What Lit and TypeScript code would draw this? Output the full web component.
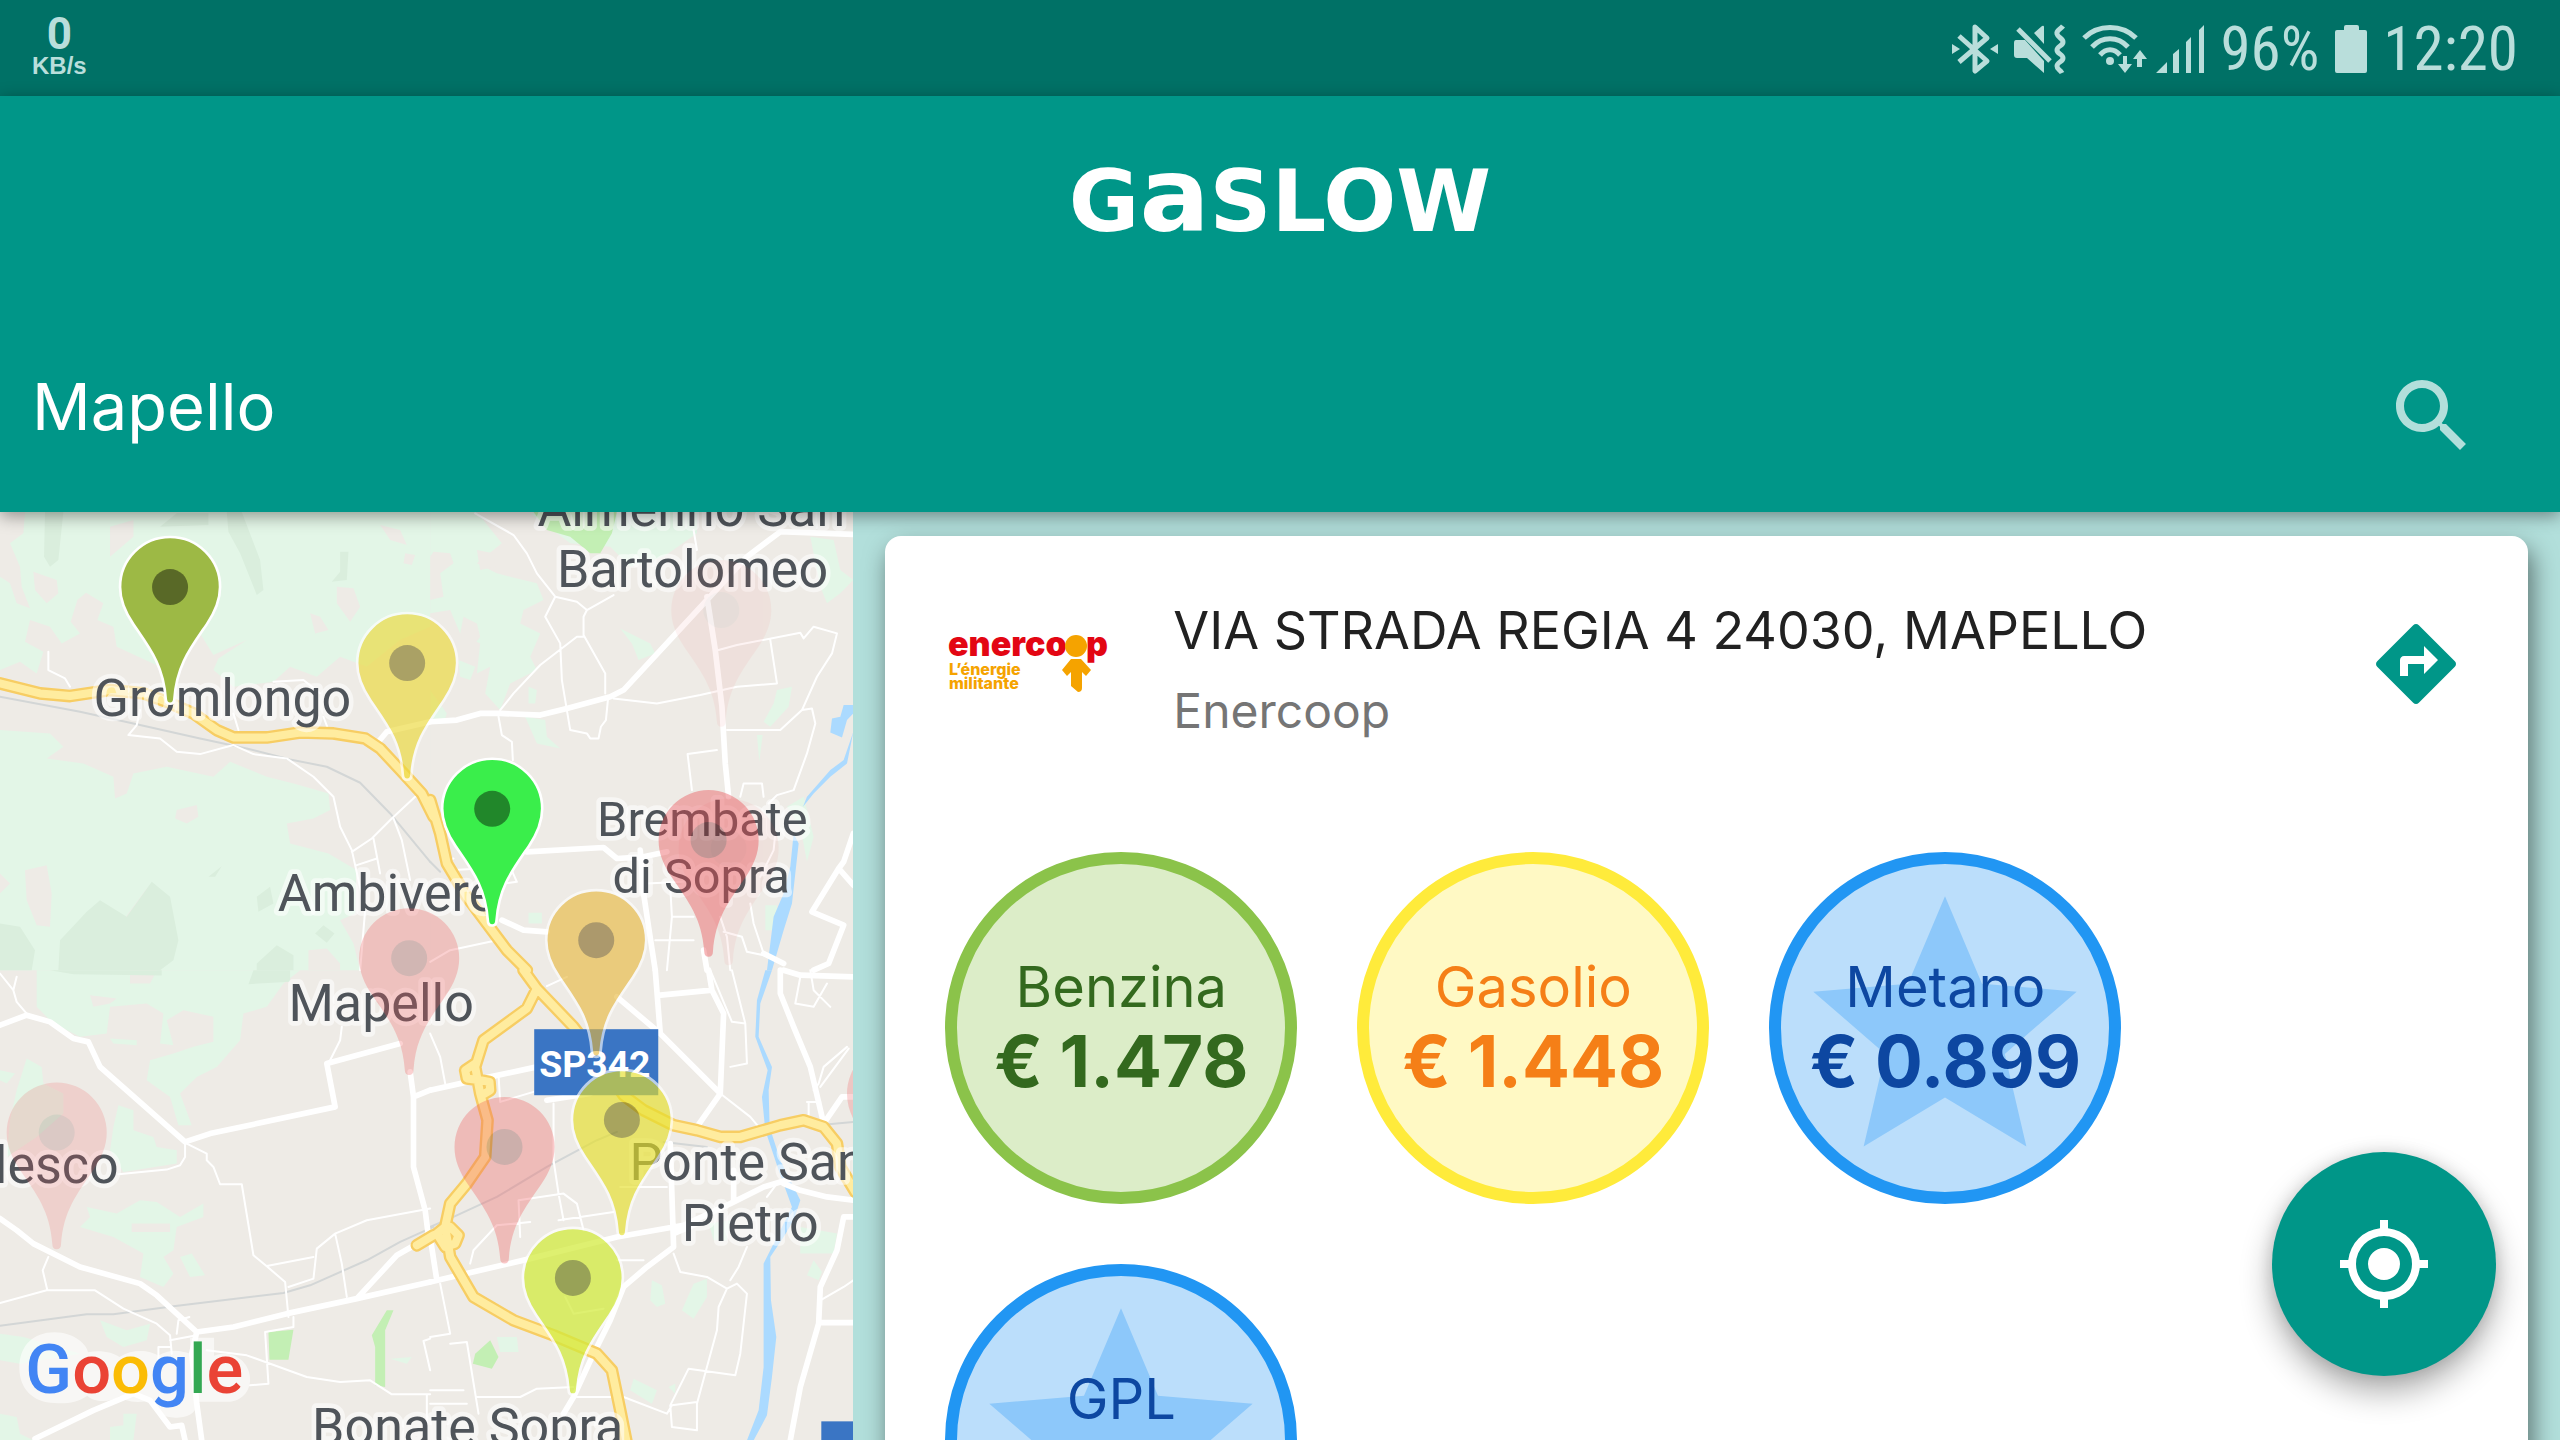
import { LitElement, html, svg, css, nothing } from "lit";
import { customElement, property } from "lit/decorators.js";

interface Fuel {
  name: string;
  price: string;
  tone: "good" | "fair" | "best";
  star?: boolean;
}

interface Pin {
  x: number;
  y: number;
  fill: string;
  opacity: number;
}

interface Label {
  x: number;
  y: number;
  text: string;
  anchor: "start" | "middle" | "end";
  small?: boolean;
}

interface Tile {
  x: number;
  y: number;
  green: string[];
  land: string[];
  forest: string[];
  park: string[];
  water: string[];
  rail: string[];
  minor: string[];
  major: string[];
  highway: string[];
}

const FUELS: Fuel[] = [
  { name: "Benzina", price: "€ 1.478", tone: "good" },
  { name: "Gasolio", price: "€ 1.448", tone: "fair" },
  { name: "Metano", price: "€ 0.899", tone: "best", star: true },
  { name: "GPL", price: "", tone: "best", star: true },
];

const TILES: Tile[] = [
  {
    x: 0,
    y: -36,
    green: ["M0 30H1290V600L1060 900 1080 1410H0Z"],
    land: [
      "M0 510L60 485 110 520 130 455 75 425 90 360 150 380 185 430 240 400 212 365 232 300 258 278 310 310 292 360 340 380 350 440 480 500 600 400 640 465 740 420 655 475 640 510 700 560 820 545 870 500 950 530 1020 470 1100 500 1200 420 1290 380V1410H1080L1060 1330 1020 1260 1065 1240 1070 1110 985 1060 870 1030 860 970 940 955 990 930 985 880 880 850 800 830 690 785 640 830 500 800 400 820 380 880 345 895 340 830 250 790 140 775 190 740 150 700 0 690Z",
      "M0 36H75L70 100 30 130 60 200 65 260 90 325 50 310 30 250 0 230Z",
      "M330 80L400 60 400 110 330 170Z",
      "M100 215L170 240 175 280 140 310 105 270Z",
      "M1140 75L1200 90 1220 135 1170 120Z",
      "M1215 160L1245 165 1235 195 1210 190Z",
      "M1010 260L1060 265 1080 320 1050 365 1010 310Z",
      "M930 340L960 350 985 390 945 400Z",
      "M530 930L590 915 595 950 560 970 525 955Z",
      "M75 1110L140 1095 155 1180 150 1280 110 1275 80 1200Z",
      "M255 1240L370 1260 440 1165 480 1200 400 1290 300 1290Z",
      "M925 1350L980 1345 1020 1390 1020 1410H925Z",
      "M0 1120L30 1150 0 1180Z",
    ],
    forest: [
      "M135 36H190L175 180 150 200 132 170Z",
      "M680 36H725L780 180 790 270 770 285 720 160 685 95Z",
      "M480 80L530 40 625 40 625 75Z",
      "M1020 155H1045L1040 240 995 245 1020 215Z",
      "M0 1270L60 1280 105 1350 95 1410H0Z",
      "M180 1320L260 1235 300 1200 380 1250 455 1145 510 1190 535 1320 520 1380 480 1410H175Z",
      "M770 1190L810 1160 820 1210 775 1235Z",
      "M945 1300L970 1275 1003 1300 980 1328Z",
      "M770 1390L830 1335 880 1365 880 1410H770Z",
      "M625 1130L665 1098 645 1130Z",
    ],
    park: [],
    water: [],
    rail: ["M0 590L240 635 420 675 600 715 740 745 870 778 980 800 1080 848 1170 940 1290 1085"],
    minor: [
      "M145 455V510L195 535 210 560",
      "M420 630L410 675 385 705 480 715 530 755 600 762 700 735 760 762 860 775 940 830 1000 890 1020 980 1055 1050 1095 1230 1080 1410",
      "M1055 1055L1115 1015 1175 955 1245 890",
      "M1180 955L1205 1020 1230 1140",
      "M1120 1015L1140 1120M1070 1095L1130 1075M700 640L715 690M970 650L985 690M820 545L910 540 960 580",
    ],
    major: ["M1135 725L1160 695 1290 665"],
    highway: ["M0 550L120 580 210 588 330 570 430 580 500 605 580 640 650 690 700 712 800 712 900 697 1000 700 1095 715 1140 745 1210 820 1265 880 1300 950"],
  },
  {
    x: 1290,
    y: -36,
    green: [
      "M0 36H140L215 130 140 190 200 220 320 250 340 300 280 330 270 370 330 400 300 470 320 510 240 550 210 630 165 580 180 500 140 520 150 430 90 400 60 330 0 340Z",
      "M85 480L135 500 120 540 90 530Z",
      "M0 570L50 640 40 670 0 660Z",
      "M300 40L420 36H800V100L700 170 600 200 540 140 420 130Z",
      "M570 385L660 430 675 460 625 480 605 430Z",
      "M1040 570L1085 560 1075 620 1020 680 1000 665 1030 610Z",
      "M1140 110L1210 120 1230 210 1269 240 1230 280 1190 310 1170 260Z",
      "M285 650L345 660 350 710 390 745 320 730Z",
      "M980 705H997L987 785Z",
      "M1070 920L1120 890 1150 1010 1130 1085 1110 980Z",
      "M1005 1215H1040V1290H1005Z",
      "M295 560L320 570 315 610 295 610ZM295 1238H335V1270H295Z",
    ],
    land: ["M10 155L60 160 70 190 30 220 40 290 0 300V170ZM140 150L190 160 195 200 150 210ZM100 350L140 370 150 410 120 450 90 400Z"],
    forest: [],
    park: ["M310 36H560L545 100 510 160 480 160 420 110 350 90Z"],
    water: [
      "M1240 615H1269V640L1250 660 1235 712 1200 697 1205 655 1230 650Z",
      "M1269 695L1250 790 1200 830 1150 880 1118 920 1130 890 1200 810 1240 780Z",
      "M1090 1000L1105 1030 1095 1120 1085 1210 1060 1290 1025 1410H1010L1030 1250 1060 1180 1080 1100Z",
    ],
    rail: ["M0 1085L30 1115"],
    minor: [
      "M135 40L250 105 290 160 320 220 375 290 345 350 390 430 395 540 420 690 470 700 480 715 505 715 512 680 527 660 533 600",
      "M375 290L440 305 470 330 460 350V405L525 520V580M470 330L550 285",
      "M210 630L250 580 330 495 440 410H460",
      "M205 650L215 705 245 725 248 780",
      "M865 450L920 435 1110 398 1120 415 1150 380 1220 400 1205 460 1160 530 1115 630 1050 690H890M1020 420L1040 550 920 560 810 585 680 610 550 595",
      "M1115 630L1145 625 1155 670 1130 760 1090 870 1040 885 1015 910",
      "M930 890L940 850H995L1000 890M785 870L772 762 860 750M790 90L800 150",
      "M0 1385L60 1350 200 1320M70 1075L40 1085M60 1110L240 1100 260 1145 220 1150",
      "M710 1410L725 1250 720 1160M675 1320H790M725 1250H790M880 1295L935 1310 950 1355 1000 1365M650 1150L760 1145M900 1410L890 1310 870 1250M990 1130L1030 1050 1035 1000M960 1210L970 1270 1000 1360",
    ],
    major: [
      "M0 665L80 660 150 640 210 640 330 645 410 625 540 590 580 570 830 300 950 170 1050 95 1269 103",
      "M830 290L855 450 875 620 885 790 895 890",
      "M290 1055L520 1042 560 1075 640 1070 710 1055",
      "M630 1050L640 1180 655 1280 675 1410",
      "M215 1260L280 1290 350 1295",
      "M820 1350L830 1410M1269 1000L1240 1085 1225 1105 1145 1235 1240 1275 1195 1390 1150 1410M1225 1105L1269 1155M1000 1360L1060 1390",
    ],
    highway: ["M0 900L30 1000 50 1090 110 1190 170 1270 230 1350 290 1410"],
  },
  {
    x: 0,
    y: 1374,
    green: [
      "M110 0H900L850 40 800 110 730 130 720 210 650 290 590 320 540 370 575 465 535 465 510 380 440 330 450 270 520 250 580 230 640 215 640 140 550 120 500 150 520 225 480 220 490 130 440 100 330 110 320 190 240 200 160 160 110 110Z",
      "M80 265L125 290 130 340 190 370 190 430 110 500 20 560 30 450 50 360Z",
      "M355 405L400 420 400 480 460 500 470 530 530 540 530 580 370 605 330 540 340 470Z",
      "M260 710L350 730 420 690 470 695 540 740 610 700 610 740 530 770 520 840 490 860 520 910 490 950 420 920 430 850 340 800 240 770 270 740Z",
      "M540 860L575 850 615 915 570 920Z",
      "M300 1050L380 1080 450 1060 440 1110 370 1130 320 1100Z",
      "M0 1090L70 1100 240 1150 60 1180 0 1170Z",
      "M0 1330L50 1340 60 1390 100 1410H0Z",
      "M370 1330L410 1330 400 1410H330L330 1370 370 1365Z",
      "M330 205L410 210V225L340 220ZM0 300L45 310 20 340 0 330Z",
      "M1170 1165L1235 1160 1220 1180Z",
    ],
    land: ["M395 760H510V785H395Z", "M390 0H470L450 40H390ZM270 75L350 85 330 100 280 110Z"],
    forest: ["M150 0H485V16L220 12ZM760 0H870V35L745 42Z"],
    park: ["M805 1085L880 1078 865 1168H808ZM1160 1020H1180L1155 1080V1250L1125 1245V1130L1115 1095Z"],
    water: [],
    rail: ["M0 1066L260 1032 340 1032 520 1008 850 968 930 945 1100 870 1200 815 1300 770"],
    minor: [
      "M0 10L40 60 50 95 80 130M50 20L40 60",
      "M555 520V560L540 585 500 598 355 612M560 520L620 550V570L640 590 660 642H725L760 855 800 888 855 935 865 1040",
      "M800 887L940 860M0 998L140 960H285L370 1015 470 1060 510 1095 515 1150M145 860L128 900 142 960",
      "M1290 715L1100 750 1005 790 950 835 940 925M1005 790L1025 880 1040 980M880 1040V1070L795 1085 805 1240 750 1245M510 1110L590 1095M475 1130H510M475 1130V1180M530 1090L535 1050 568 1040",
      "M620 1140L740 1155 920 1220 1020 1235 1110 1230 1175 1272H1290M985 280L1020 210 1025 170M1290 1105L1270 1112 1290 1200M1280 1272V1400",
      "M865 950L940 925",
    ],
    major: [
      "M0 165L80 135 150 155 220 205 265 215 300 290 555 515 630 490 1005 410 980 280 1200 220",
      "M0 745L50 780 100 820 240 890 420 940 470 975 590 1085 700 1070 860 1030 1070 985 1290 935M1070 985L1190 855 1260 815",
      "M590 1085L575 1150 590 1300 605 1410M105 1405L280 1320 400 1270 450 1290 510 1370 545 1365 555 1410",
      "M1230 305L1240 380 1240 590 1275 720 1285 800M1240 380L1290 360",
    ],
    highway: ["M1250 825L1300 795"],
  },
  {
    x: 1290,
    y: 1374,
    green: [
      "M665 930L695 945 705 1000 680 1010 660 990Z",
      "M790 940L830 925 830 980 790 1045 755 1020Z",
      "M1150 870L1175 905 1165 930 1130 915ZM1110 770L1220 790 1210 850 1110 850Z",
      "M200 1100L260 1100 265 1145 210 1145Z",
      "M610 1225L680 1260 665 1300 600 1260ZM715 1250L735 1240 735 1270Z",
      "M835 760L900 750 890 810 850 810Z",
    ],
    land: [],
    forest: [],
    park: ["M180 1110L205 1160 185 1195 128 1180 135 1150Z"],
    water: [
      "M1005 0H1025L990 100 985 200 1025 290 1015 360 1018 470 1050 570 1085 640 1110 690 1090 750 1060 800 1020 860 1022 990 1038 1100 1025 1220 1010 1335 970 1410H950L985 1320 1000 1190 1000 1000 1000 880 1040 800 1085 710 1045 600 1005 480 995 380 1012 300 975 200 980 90Z",
    ],
    rail: ["M0 770L70 740 200 680 350 590 500 510 560 485M700 515L830 530M1195 462L1269 455"],
    minor: [
      "M350 48L410 20M0 190L30 260 45 340M205 315L210 395 310 365M370 400V570L385 670 400 750",
      "M265 690L400 670 440 700 460 780M385 750L550 725M265 690L270 800M120 880L130 840 200 765 300 755",
      "M840 0L905 155 945 160 950 280 900 290M905 0L945 160M870 370L960 440 985 470",
      "M1110 20L1095 100 1150 110 1190 40M1140 0L1150 60 1200 110M1250 230L1180 290 1165 340 1150 360M1255 235L1170 350M1130 395H1170M1135 395V440",
      "M730 850L750 905 830 920 890 955 920 940 950 970 930 1150 915 1215 775 1195 720 1305 725 1370 800 1380V1300L860 1080 865 1010 890 955",
      "M440 1280H580L710 1330 725 1305 800 1295M140 1280H270L320 1255 430 1250M60 1120L110 1115 145 1330M30 940L60 1090 0 1100M0 1260H100M0 1300H110",
      "M570 650H710M560 870L640 870M405 980L430 1030 520 1015M900 930L925 890 950 830M1170 990L1240 950 1269 930M1040 640L1010 680",
    ],
    major: [
      "M0 935L300 865 560 800 760 765 900 700 1000 650 1100 620",
      "M0 360L180 320 320 290M350 390L480 370",
      "M560 80L690 190 870 370 800 470M675 0L690 190M835 0L845 60 880 130 870 370M690 75L845 60",
      "M1050 0V70L1090 170 1140 290 1180 460M1180 460L1235 380H1269",
      "M720 520L730 830 650 890 580 950 540 1050 490 1150 430 1280 400 1330M730 790L800 760M910 600V690",
      "M0 800L20 930M1269 740H1240L1220 840 1170 950 1165 1060 1110 1250 1080 1410M1170 1057H1269M1060 640L1110 660 1190 680 1269 690M1060 0L1110 15 1269 20",
    ],
    highway: [
      "M280 0L320 55 430 170 500 260 580 375 640 420 730 465 800 480 870 500H930L1050 465 1120 450 1180 470 1220 520 1230 590 1275 665",
      "M320 55L290 115 160 210 135 290 150 370 172 450 165 560 110 640 60 700 45 770 60 860 130 980 250 1050 370 1095 500 1150 545 1200 570 1320 590 1420",
      "M135 280L105 300 110 325 150 330M150 330L178 335 180 360 155 375M45 770L20 790 45 830 75 820 85 795 60 770",
    ],
  },
];

const LABELS: Label[] = [
  { x: 667, y: 612, text: "Gromlongo", anchor: "middle" },
  { x: 833, y: 1197, text: "Ambivere", anchor: "start" },
  { x: 865, y: 1527, text: "Mapello", anchor: "start" },
  { x: 356, y: 2012, text: "lesco", anchor: "end" },
  { x: 2073, y: 42, text: "Almenno San", anchor: "middle" },
  { x: 2077, y: 226, text: "Bartolomeo", anchor: "middle" },
  { x: 2106, y: 972, text: "Brembate", anchor: "middle", small: true },
  { x: 2103, y: 1144, text: "di Sopra", anchor: "middle", small: true },
  { x: 1888, y: 2004, text: "Ponte San", anchor: "start" },
  { x: 2250, y: 2187, text: "Pietro", anchor: "middle" },
  { x: 936, y: 2799, text: "Bonate Sopra", anchor: "start" },
];

const PINS: Pin[] = [
  { x: 2163, y: 294, fill: "#f06464", opacity: 0.07 },
  { x: 2185, y: 1009, fill: "#f06464", opacity: 0.07 },
  { x: 510, y: 225, fill: "#9db945", opacity: 1 },
  { x: 1221, y: 453, fill: "#ecd93a", opacity: 0.65 },
  { x: 1476, y: 890, fill: "#3aee4b", opacity: 1 },
  { x: 2125, y: 984, fill: "#ea4a50", opacity: 0.4 },
  { x: 1227, y: 1338, fill: "#f0585a", opacity: 0.28 },
  { x: 1788, y: 1284, fill: "#e8b83c", opacity: 0.62 },
  { x: 170, y: 1861, fill: "#f0585a", opacity: 0.18 },
  { x: 2690, y: 1744, fill: "#f0585a", opacity: 0.25 },
  { x: 1513, y: 1904, fill: "#f0585a", opacity: 0.32 },
  { x: 1865, y: 1823, fill: "#e6e02a", opacity: 0.65 },
  { x: 1718, y: 2297, fill: "#d2eb3a", opacity: 0.72 },
];

const PIN_PATH =
  "M0 350C-8 350-13 345-13 335C-20 235-60 185-110 112C-135 75-150 40-150 0A150 150 0 0 1 150 0C150 40 135 75 110 112C60 185 20 235 13 335C13 345 8 350 0 350Z";

@customElement("status-bar")
class StatusBar extends LitElement {
  static styles = css`
    :host {
      display: flex;
      align-items: center;
      justify-content: space-between;
      height: 96px;
      padding: 0 42px 0 32px;
      background: #007166;
      color: #b9dedb;
      box-sizing: border-box;
    }
    .speed {
      display: flex;
      flex-direction: column;
      align-items: center;
      font: 700 24px/28px "Liberation Sans", Arial, sans-serif;
    }
    .speed-value {
      font: 700 44px/36px "Liberation Sans Narrow", Roboto, sans-serif;
    }
    .tray,
    .pair {
      display: flex;
      align-items: center;
      gap: 16px;
    }
    .tray {
      padding-top: 2px;
      font: 400 61px/64px "Liberation Sans Narrow", "Roboto Condensed", Roboto, sans-serif;
    }
    .tray svg {
      display: block;
      height: 56px;
      fill: currentColor;
    }
    .tray .line {
      fill: none;
      stroke: currentColor;
      stroke-width: 5;
      stroke-linejoin: round;
    }
    .radios {
      display: flex;
      gap: 8px;
    }
  `;

  render() {
    return html`
      <div class="speed"><span class="speed-value">0</span><span>KB/s</span></div>
      <div class="tray">
        <svg width="46" viewBox="0 0 46 56" role="img" aria-label="Bluetooth">
          <path class="line" d="M7 15L35 40 23 50V6L35 17 7 41" />
          <path d="M0 23L8 28 0 33ZM46 23L38 28 46 33Z" />
        </svg>
        <svg width="52" viewBox="0 0 52 56" role="img" aria-label="Vibrate">
          <path d="M2 19H11L30 40V52L13 37H3Q0 37 0 34V22Q0 19 2 19ZM20 12L28 5Q30 4 30 6V23Z" />
          <path class="line" d="M4 8L36 40" />
          <path class="line" d="M49 5C46 9 42 9 43 13S49 17 49 21 43 25 43 29 49 33 49 37 43 41 43 45 46 48 48 52" />
        </svg>
        <div class="radios">
          <svg width="66" viewBox="0 0 66 56" role="img" aria-label="Wi-Fi">
            <path class="line" d="M2 17C16 3 40 3 54 17M10 26C20 15 36 15 46 26M18 34C24 27 32 27 38 34" />
            <circle cx="28" cy="40" r="4" />
            <path d="M41 35H45V43H50L43 52 36 43H41ZM55 46H60V38H65L58 29 51 38H55Z" />
          </svg>
          <svg width="48" viewBox="0 0 48 56" role="img" aria-label="Signal">
            <path d="M0 52L11 41V52ZM17 33L23 28V52H17ZM30 21L35 16V52H30ZM43 9L48 4V52H43Z" />
          </svg>
        </div>
        <div class="pair">
          <span>96%</span>
          <svg width="32" viewBox="0 0 32 56" role="img" aria-label="Battery">
            <path d="M9 9V6Q9 4 11 4H22Q24 4 24 6V9H30Q32 9 32 11V50Q32 52 30 52H2Q0 52 0 50V11Q0 9 2 9Z" />
          </svg>
        </div>
        <time>12:20</time>
      </div>
    `;
  }
}

@customElement("station-map")
class StationMap extends LitElement {
  static styles = css`
    :host {
      display: block;
      overflow: hidden;
      background: #eeebe6;
    }
    .canvas {
      display: block;
      width: 100%;
      height: 100%;
    }
    .green {
      fill: #e3f6e7;
    }
    .land {
      fill: #eeebe6;
    }
    .forest {
      fill: #daeedd;
    }
    .park {
      fill: #c3efb4;
    }
    .water {
      fill: #abdaff;
    }
    .rail,
    .minor,
    .major,
    .highway-edge,
    .highway {
      fill: none;
      stroke-linejoin: round;
      stroke-linecap: round;
    }
    .rail {
      stroke: #d3d6d6;
      stroke-width: 6;
    }
    .minor {
      stroke: #ffffff;
      stroke-width: 6;
    }
    .major {
      stroke: #ffffff;
      stroke-width: 17;
    }
    .highway-edge {
      stroke: #f7cd63;
      stroke-width: 38;
    }
    .highway {
      stroke: #ffec9f;
      stroke-width: 24;
    }
    .label {
      font: 400 156px Roboto, sans-serif;
      fill: #4f545a;
      stroke: rgba(255, 255, 255, 0.55);
      stroke-width: 28;
      stroke-linejoin: round;
      paint-order: stroke;
    }
    .small {
      font-size: 146px;
    }
    .badge {
      fill: #3a75c4;
    }
    .badge-text {
      font: 700 112px Roboto, sans-serif;
      fill: #ffffff;
    }
    .pin {
      stroke: #ffffff;
      stroke-width: 8;
    }
    .faint {
      stroke: none;
    }
    .dot {
      fill: #000000;
      fill-opacity: 0.43;
    }
    .brand-halo {
      fill: rgba(255, 255, 255, 0.6);
    }
    .brand {
      font: 500 206px Roboto, sans-serif;
    }
    .blue {
      fill: #4285f4;
    }
    .red {
      fill: #ea4335;
    }
    .amber {
      fill: #fbbc05;
    }
    .leaf {
      fill: #34a853;
    }
  `;

  private layer(key: Exclude<keyof Tile, "x" | "y">, cls: string) {
    return TILES.map(
      (t) => svg`<g transform="translate(${t.x} ${t.y})"><path class=${cls} d=${t[key].join("")} /></g>`
    );
  }

  render() {
    return html`
      <svg class="canvas" viewBox="0 0 2559 2784" preserveAspectRatio="xMinYMin slice" role="img" aria-label="Map">
        ${this.layer("green", "green")} ${this.layer("land", "land")} ${this.layer("forest", "forest")}
        ${this.layer("park", "park")} ${this.layer("rail", "rail")} ${this.layer("minor", "minor")}
        ${this.layer("water", "water")} ${this.layer("major", "major")}
        ${this.layer("highway", "highway-edge")} ${this.layer("highway", "highway")}
        ${LABELS.map(
          (l) => svg`<text class=${l.small ? "label small" : "label"} x=${l.x} y=${l.y} text-anchor=${l.anchor}>${l.text}</text>`
        )}
        <rect class="badge" x="1602" y="1551" width="372" height="198" />
        <text class="badge-text" x="1784" y="1694" text-anchor="middle">SP342</text>
        <rect class="badge" x="2463" y="2727" width="372" height="198" />
        ${PINS.map(
          (p) => svg`
            <g transform="translate(${p.x} ${p.y})" opacity=${p.opacity}>
              <path class=${p.opacity < 0.5 ? "faint" : "pin"} fill=${p.fill} d=${PIN_PATH} />
              <circle class="dot" r="54" />
            </g>`
        )}
        <path
          class="brand-halo"
          d="M163 2460C225 2460 262 2500 264 2520C300 2512 340 2520 358 2534C400 2508 450 2514 474 2530C510 2508 540 2514 570 2524V2476H642V2530C700 2508 750 2550 750 2600C750 2650 710 2670 680 2668H594C588 2706 560 2716 526 2716C486 2716 462 2696 456 2664C400 2676 372 2664 358 2652C330 2672 280 2670 262 2650C230 2672 200 2674 163 2672C100 2670 58 2630 58 2566C58 2500 100 2460 163 2460Z"
        />
        <text class="brand" x="76" y="2643"><tspan class="blue">G</tspan><tspan class="red">o</tspan><tspan class="amber">o</tspan><tspan class="blue">g</tspan><tspan class="leaf">l</tspan><tspan class="red">e</tspan></text>
      </svg>
    `;
  }
}

@customElement("fuel-price")
class FuelPrice extends LitElement {
  @property({ attribute: false }) fuel!: Fuel;

  static styles = css`
    :host {
      display: block;
    }
    .disc {
      display: grid;
      place-items: center;
      width: 352px;
      height: 352px;
      border: 12px solid;
      border-radius: 50%;
      box-sizing: border-box;
    }
    .disc > * {
      grid-area: 1 / 1;
    }
    .good {
      color: #33691e;
      background: #dcedc8;
      border-color: #8bc34a;
    }
    .fair {
      color: #f57f17;
      background: #fff9c4;
      border-color: #ffeb3b;
    }
    .best {
      color: #0d47a1;
      background: #bbdefb;
      border-color: #2196f3;
    }
    .star {
      width: 316px;
      height: 316px;
      fill: #8dc8fa;
    }
    .text {
      display: flex;
      flex-direction: column;
      align-items: center;
      padding-bottom: 6px;
      white-space: nowrap;
    }
    .name {
      font-size: 56px;
      line-height: 72px;
    }
    .price {
      min-height: 76px;
      font-size: 71px;
      line-height: 76px;
      font-weight: 700;
    }
  `;

  render() {
    const f = this.fuel;
    return html`
      <div class="disc ${f.tone}">
        ${f.star
          ? html`<svg class="star" viewBox="0 0 24 24" aria-hidden="true">
              <path d="M12 17.27L18.18 21l-1.64-7.03L22 9.24l-7.19-.61L12 2 9.19 8.63 2 9.24l5.46 4.73L5.82 21z" />
            </svg>`
          : nothing}
        <div class="text">
          <span class="name">${f.name}</span>
          <span class="price">${f.price}</span>
        </div>
      </div>
    `;
  }
}

@customElement("station-card")
class StationCard extends LitElement {
  static styles = css`
    :host {
      display: block;
      background: #ffffff;
      border-radius: 16px;
      box-shadow: 4px 12px 24px rgba(0, 0, 0, 0.5);
    }
    .head {
      display: flex;
      align-items: center;
      gap: 64px;
      height: 256px;
      padding: 0 64px;
      box-sizing: border-box;
    }
    .logo {
      flex: none;
      width: 160px;
      height: 60px;
      overflow: visible;
    }
    .logo-name {
      font: 900 34px Inter, sans-serif;
      fill: #e30613;
    }
    .logo-tag {
      font: 800 16px Inter, sans-serif;
      fill: #f5a300;
    }
    .figure {
      fill: #f5a300;
    }
    .address {
      flex: 1;
      min-width: 0;
      padding-top: 14px;
    }
    .street {
      margin: 0;
      font-size: 52px;
      line-height: 80px;
      font-weight: 400;
      color: #212121;
      white-space: nowrap;
    }
    .company {
      margin: 0;
      font-size: 48px;
      line-height: 80px;
      color: #757575;
    }
    .route {
      flex: none;
      display: block;
      width: 96px;
      height: 96px;
      fill: #009688;
    }
    .route svg {
      display: block;
    }
    .fuels {
      display: flex;
      flex-wrap: wrap;
      gap: 60px;
      margin: 0;
      padding: 60px;
      list-style: none;
    }
  `;

  render() {
    return html`
      <header class="head">
        <svg class="logo" viewBox="0 0 160 60" role="img" aria-label="Enercoop">
          <text class="logo-name" x="-1" y="22">enerco</text>
          <circle class="figure" cx="127" cy="12" r="11" />
          <text class="logo-name" x="137" y="22">p</text>
          <path class="figure" d="M122 25H132L142 36 137 42 133 38V54Q133 58 129 58L122 52V38L118 42 113 36Z" />
          <text class="logo-tag" x="0" y="41">L’énergie</text>
          <text class="logo-tag" x="0" y="55">militante</text>
        </svg>
        <div class="address">
          <h2 class="street">VIA STRADA REGIA 4 24030, MAPELLO</h2>
          <p class="company">Enercoop</p>
        </div>
        <a class="route" href="#route" aria-label="Directions">
          <svg width="96" height="96" viewBox="0 0 24 24" aria-hidden="true">
            <path d="M21.71 11.29l-9-9c-.39-.39-1.02-.39-1.41 0l-9 9c-.39.39-.39 1.02 0 1.41l9 9c.39.39 1.02.39 1.41 0l9-9c.39-.38.39-1.01 0-1.41zM14 14.5V12h-4v3H8v-4c0-.55.45-1 1-1h5V7.5l3.5 3.5-3.5 3.5z" />
          </svg>
        </a>
      </header>
      <ul class="fuels">
        ${FUELS.map((f) => html`<li><fuel-price .fuel=${f}></fuel-price></li>`)}
      </ul>
    `;
  }
}

@customElement("app-root")
class AppRoot extends LitElement {
  static styles = css`
    :host {
      display: flex;
      flex-direction: column;
      height: 100vh;
      overflow: hidden;
      background: #b2dfdb;
      font-family: Inter, "Open Sans", sans-serif;
    }
    .bar {
      flex: none;
      z-index: 1;
      background: #009688;
      box-shadow: 0 4px 16px rgba(0, 0, 0, 0.4);
    }
    .title {
      display: flex;
      align-items: center;
      justify-content: center;
      height: 224px;
      margin: 0;
      padding-bottom: 20px;
      box-sizing: border-box;
      font: 700 86px/120px "DejaVu Sans", sans-serif;
      color: #ffffff;
    }
    .tall {
      font-size: 104px;
    }
    .search {
      display: flex;
      align-items: center;
      height: 192px;
      padding: 0 80px 0 32px;
    }
    .query {
      flex: 1;
      min-width: 0;
      height: 128px;
      padding: 0 0 20px;
      border: 0;
      outline: 0;
      background: none;
      color: #ffffff;
      font: 400 65px/96px Inter, "Open Sans", sans-serif;
      box-sizing: border-box;
    }
    .icon-button {
      flex: none;
      padding: 0;
      border: 0;
      background: none;
      cursor: pointer;
    }
    .icon-button svg,
    .locate svg {
      display: block;
    }
    .icon-button svg {
      fill: #b2dfdb;
    }
    .content {
      position: relative;
      flex: 1;
      min-height: 0;
      display: grid;
      grid-template-columns: 1fr 2fr;
      grid-template-rows: minmax(0, 1fr);
    }
    .stations {
      min-width: 0;
      padding: 24px 32px;
      overflow: hidden;
    }
    .locate {
      position: absolute;
      right: 64px;
      bottom: 64px;
      display: grid;
      place-items: center;
      width: 224px;
      height: 224px;
      padding: 0;
      border: 0;
      border-radius: 50%;
      background: #009688;
      box-shadow: 0 16px 32px rgba(0, 0, 0, 0.32), 0 0 16px rgba(0, 0, 0, 0.12);
      cursor: pointer;
    }
    .locate svg {
      fill: #ffffff;
    }
  `;

  render() {
    return html`
      <status-bar></status-bar>
      <header class="bar">
        <h1 class="title"><span>G<span class="tall">a</span>SLOW</span></h1>
        <form class="search" role="search" @submit=${(e: Event) => e.preventDefault()}>
          <input class="query" type="text" name="place" aria-label="Place" .value=${"Mapello"} />
          <button class="icon-button" type="submit" aria-label="Search">
            <svg width="96" height="96" viewBox="0 0 24 24" aria-hidden="true">
              <path d="M15.5 14h-.79l-.28-.27C15.41 12.59 16 11.11 16 9.5 16 5.91 13.09 3 9.5 3S3 5.91 3 9.5 5.91 16 9.5 16c1.61 0 3.09-.59 4.23-1.57l.27.28v.79l5 4.99L20.49 19l-4.99-5zm-6 0C7.01 14 5 11.99 5 9.5S7.01 5 9.5 5 14 7.01 14 9.5 11.99 14 9.5 14z" />
            </svg>
          </button>
        </form>
      </header>
      <main class="content">
        <station-map></station-map>
        <section class="stations">
          <station-card></station-card>
        </section>
        <button class="locate" type="button" aria-label="My location">
          <svg width="96" height="96" viewBox="0 0 24 24" aria-hidden="true">
            <path fill-rule="evenodd" d="M11 1H13V3.06A9 9 0 0 1 20.94 11H23V13H20.94A9 9 0 0 1 13 20.94V23H11V20.94A9 9 0 0 1 3.06 13H1V11H3.06A9 9 0 0 1 11 3.06ZM12 5A7 7 0 1 0 12 19A7 7 0 1 0 12 5ZM12 8A4 4 0 1 1 12 16A4 4 0 1 1 12 8Z" />
          </svg>
        </button>
      </main>
    `;
  }
}
